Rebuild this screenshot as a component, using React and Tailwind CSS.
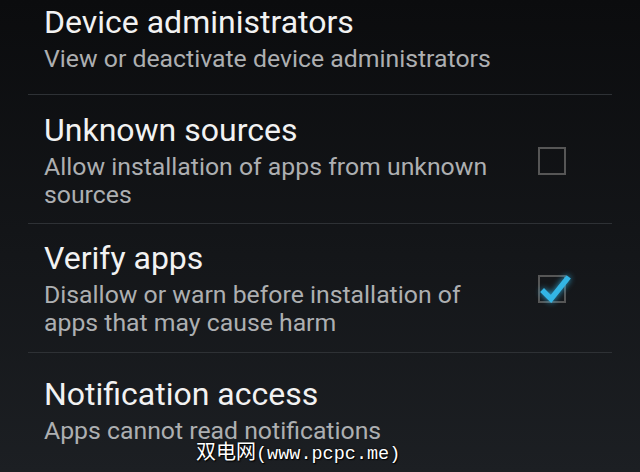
import React from 'react';

const items = [
  {
    title: 'Device administrators',
    summary: 'View or deactivate device administrators',
    pad: 'pt-[4px] pb-[21px]',
  },
  {
    title: 'Unknown sources',
    summary: 'Allow installation of apps from unknown sources',
    checkbox: 'off',
    pad: 'pt-[17px] pb-[14px]',
  },
  {
    title: 'Verify apps',
    summary: 'Disallow or warn before installation of apps that may cause harm',
    checkbox: 'on',
    pad: 'pt-[16px] pb-[15px]',
  },
  {
    title: 'Notification access',
    summary: 'Apps cannot read notifications',
    pad: 'pt-[23px] pb-[24px]',
  },
];

const CheckBox = ({ checked }) => (
  <div className="relative w-[28px] h-[28px] border-2 border-[#565656]">
    {checked && (
      <svg
        className="absolute -left-[8px] -top-[12px] w-[44px] h-[44px] drop-shadow-[0_0_3px_rgba(51,181,229,0.9)]"
        viewBox="0 0 44 44"
        fill="none"
      >
        <path d="M12 27 L19 34 L35 14" stroke="#33b5e5" strokeWidth="5.5" strokeLinecap="square" strokeLinejoin="miter" />
      </svg>
    )}
  </div>
);

const App = () => {
  return (
    <div
      className="relative w-[640px] h-[472px] overflow-hidden bg-linear-to-b from-[#0b0c0e] to-[#1c1f23]"
      style={{ fontFamily: 'Roboto, "Noto Sans", sans-serif' }}
    >
      <div className="mx-[28px]">
        {items.map((item, i) => (
          <div
            key={item.title}
            className={`flex items-center ${item.pad} ${i < items.length - 1 ? 'border-b border-[#2e3135]' : ''}`}
          >
            <div className="flex-1 pl-[16px] flex flex-col gap-[5px]">
              <div className="text-[32px] leading-[36px] text-[#f2f2f2]">{item.title}</div>
              <div className="text-[24.8px] leading-[28px] text-[#adafb1]">{item.summary}</div>
            </div>
            {item.checkbox && (
              <div className="pl-[32px] pr-[46px]">
                <CheckBox checked={item.checkbox === 'on'} />
              </div>
            )}
          </div>
        ))}
      </div>

      <div className="absolute left-[196px] top-[436px] flex items-baseline text-white [text-shadow:1px_1px_1px_#000,0_0_2px_#000]">
        <span className="text-[20px]" style={{ fontFamily: '"Noto Sans CJK SC", sans-serif' }}>双电网</span>
        <span className="text-[18.5px]" style={{ fontFamily: '"Liberation Mono", monospace' }}>(www.pcpc.me)</span>
      </div>
    </div>
  );
};

export default App;
